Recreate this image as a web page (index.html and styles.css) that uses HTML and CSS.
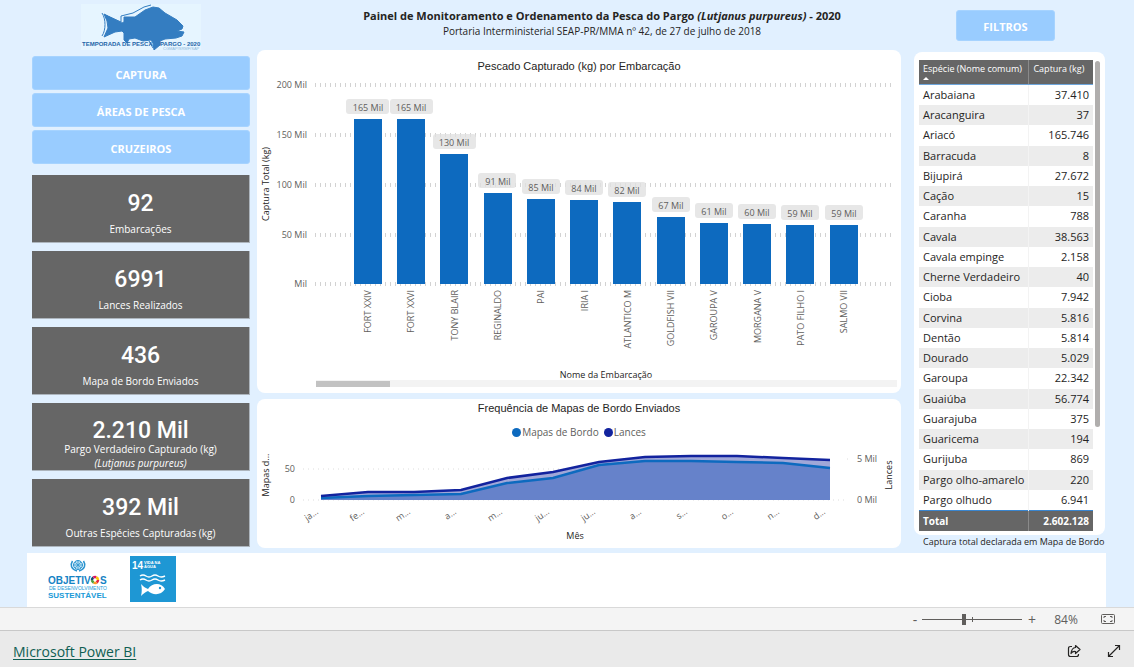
FILE: index.html
```html
<!DOCTYPE html>
<html lang="pt-BR">
<head>
<meta charset="utf-8">
<meta name="viewport" content="width=device-width, initial-scale=1">
<title>Painel de Monitoramento da Pesca do Pargo</title>
<link rel="stylesheet" href="styles.css">
</head>
<body>
<main class="report">
  <div class="dashboard">
    <aside class="sidebar">
      <svg class="brand" viewBox="0 0 120 46" role="img" aria-label="Temporada de Pesca Pargo 2020">
        <rect width="120" height="46" fill="#e6f5ff"/>
        <path d="M21 9 C25 15 25 26 21 32 M24 11 L40 18 L40 12 L52 9 L63 3 L70 1 M68 37 L72 44" fill="none" stroke="#347dc1" stroke-width="1"/>
        <path d="M23 10 L41 19 L43 18 L43 13 L54 13 L64 6 L72 3 L78 4 L84 9 L96 16 L102 22 L101 25 L96 27 L103 28 L101 32 L95 34 L84 35 L79 37 L79 41 L73 46 L72 39 L70 36 L62 37 L54 34 L48 35 L46 39 L43 36 L43 29 L41 27 L34 28 L23 33 L27 24 L26 17 Z" fill="#347dc1" stroke="#347dc1" stroke-linejoin="round"/>
        <text class="brand-name" x="1" y="42">TEMPORADA DE PESCA</text>
        <text class="brand-name" x="79" y="42">PARGO - 2020</text>
        <text class="brand-sub" x="82" y="46">CGMAP/SRMF/SAP</text>
      </svg>
      <nav class="nav">
        <button class="btn" type="button">CAPTURA</button>
        <button class="btn" type="button">ÁREAS DE PESCA</button>
        <button class="btn" type="button">CRUZEIROS</button>
      </nav>
      <section class="cards">
        <div class="card"><strong>92</strong><span>Embarcações</span></div>
        <div class="card"><strong>6991</strong><span>Lances Realizados</span></div>
        <div class="card"><strong>436</strong><span>Mapa de Bordo Enviados</span></div>
        <div class="card card-tight"><strong>2.210 Mil</strong><span>Pargo Verdadeiro Capturado (kg)</span><em>(Lutjanus purpureus)</em></div>
        <div class="card"><strong>392 Mil</strong><span>Outras Espécies Capturadas (kg)</span></div>
      </section>
    </aside>

    <div class="center">
      <header class="heading">
        <h1>Painel de Monitoramento e Ordenamento da Pesca do Pargo <em>(Lutjanus purpureus)</em> - 2020</h1>
        <p>Portaria Interministerial SEAP-PR/MMA nº 42, de 27 de julho de 2018</p>
      </header>

      <section class="panel panel-bars">
        <h2>Pescado Capturado (kg) por Embarcação</h2>
        <svg class="chart" viewBox="0 0 644 317" role="img" aria-label="Pescado Capturado (kg) por Embarcação">
          <g class="grid">
            <path d="M58 9H638M58 59H638M58 109H638M58 159H638M58 208H638"/>
          </g>
          <g class="tick end">
            <text x="50" y="12">200 Mil</text><text x="50" y="62">150 Mil</text><text x="50" y="112">100 Mil</text><text x="50" y="162">50 Mil</text><text x="50" y="211">Mil</text>
          </g>
          <g class="bars">
            <rect x="97" y="43" width="28" height="165"/><rect x="140" y="43" width="28" height="165"/><rect x="183" y="78" width="28" height="130"/><rect x="227" y="117" width="28" height="91"/><rect x="270" y="123" width="28" height="85"/><rect x="313" y="124" width="28" height="84"/><rect x="356" y="126" width="28" height="82"/><rect x="400" y="141" width="28" height="67"/><rect x="443" y="147" width="28" height="61"/><rect x="486" y="148" width="28" height="60"/><rect x="529" y="149" width="28" height="59"/><rect x="573" y="149" width="28" height="59"/>
          </g>
          <g class="pill">
            <rect x="89" y="23" width="43" height="15" rx="3"/><rect x="133" y="23" width="43" height="15" rx="3"/><rect x="176" y="58" width="43" height="15" rx="3"/><rect x="221" y="97" width="38" height="15" rx="3"/><rect x="265" y="103" width="38" height="15" rx="3"/><rect x="308" y="104" width="38" height="15" rx="3"/><rect x="351" y="106" width="38" height="15" rx="3"/><rect x="395" y="121" width="38" height="15" rx="3"/><rect x="438" y="127" width="38" height="15" rx="3"/><rect x="481" y="128" width="38" height="15" rx="3"/><rect x="524" y="129" width="38" height="15" rx="3"/><rect x="568" y="129" width="38" height="15" rx="3"/>
          </g>
          <g class="tick mid">
            <text x="111" y="35">165 Mil</text><text x="154" y="35">165 Mil</text><text x="197" y="70">130 Mil</text><text x="241" y="109">91 Mil</text><text x="284" y="115">85 Mil</text><text x="327" y="116">84 Mil</text><text x="370" y="118">82 Mil</text><text x="414" y="133">67 Mil</text><text x="457" y="139">61 Mil</text><text x="500" y="140">60 Mil</text><text x="543" y="141">59 Mil</text><text x="587" y="141">59 Mil</text>
          </g>
          <g class="tick end">
            <text transform="translate(114 214) rotate(-90)">FORT XXIV</text><text transform="translate(157 214) rotate(-90)">FORT XXVI</text><text transform="translate(201 214) rotate(-90)">TONY BLAIR</text><text transform="translate(244 214) rotate(-90)">REGINALDO</text><text transform="translate(287 214) rotate(-90)">PAI</text><text transform="translate(331 214) rotate(-90)">IRIA I</text><text transform="translate(374 214) rotate(-90)">ATLANTICO M</text><text transform="translate(417 214) rotate(-90)">GOLDFISH VII</text><text transform="translate(460 214) rotate(-90)">GAROUPA V</text><text transform="translate(504 214) rotate(-90)">MORGANA V</text><text transform="translate(547 214) rotate(-90)">PATO FILHO I</text><text transform="translate(590 214) rotate(-90)">SALMO VII</text>
          </g>
          <g class="axis mid">
            <text transform="translate(12 108) rotate(-90)">Captura Total (kg)</text>
            <text x="349" y="302">Nome da Embarcação</text>
          </g>
          <rect x="59" y="304" width="581" height="7" fill="#f3f3f3"/>
          <rect x="59" y="305" width="74" height="6" fill="#c2c2c2"/>
        </svg>
      </section>

      <section class="panel panel-area">
        <h2>Frequência de Mapas de Bordo Enviados</h2>
        <ul class="legend"><li class="key-maps">Mapas de Bordo</li><li class="key-sets">Lances</li></ul>
        <svg class="chart" viewBox="0 0 644 108" role="img" aria-label="Frequência de Mapas de Bordo Enviados">
          <path class="grid-fine" d="M46 29H538M46 60H590M590 19h1"/>
          <path d="M64 60V56L111 52L157 52L204 50L250 38L296 32L342 22L388 17L434 16L480 16L526 18L573 20V60Z" fill="#a0a7d8"/>
          <path d="M64 60V58L111 56L157 55L204 54L250 43L296 38L342 25L388 21L434 21L480 22L526 23L573 28V60Z" fill="#6682ca"/>
          <g fill="none" stroke-width="2.5">
            <path d="M64 58L111 56L157 55L204 54L250 43L296 38L342 25L388 21L434 21L480 22L526 23L573 28" stroke="#0d6abf"/>
            <path d="M64 56L111 52L157 52L204 50L250 38L296 32L342 22L388 17L434 16L480 16L526 18L573 20" stroke="#12239e"/>
          </g>
          <g class="tick end"><text x="38" y="32">50</text><text x="38" y="63">0</text></g>
          <g class="tick"><text x="600" y="22">5 Mil</text><text x="600" y="63">0 Mil</text></g>
          <g class="tick end">
            <text transform="translate(62 73) rotate(-35)">ja...</text><text transform="translate(108 73) rotate(-35)">fe...</text><text transform="translate(154 73) rotate(-35)">m...</text><text transform="translate(200 73) rotate(-35)">a...</text><text transform="translate(246 73) rotate(-35)">m...</text><text transform="translate(293 73) rotate(-35)">ju...</text><text transform="translate(339 73) rotate(-35)">ju...</text><text transform="translate(385 73) rotate(-35)">a...</text><text transform="translate(431 73) rotate(-35)">s...</text><text transform="translate(477 73) rotate(-35)">o...</text><text transform="translate(523 73) rotate(-35)">n...</text><text transform="translate(569 73) rotate(-35)">d...</text>
          </g>
          <g class="axis mid">
            <text transform="translate(12 35) rotate(-90)">Mapas d...</text>
            <text transform="translate(635 35) rotate(-90)">Lances</text>
            <text x="318" y="99">Mês</text>
          </g>
        </svg>
      </section>
    </div>

    <aside class="side-table">
      <button class="btn btn-filter" type="button">FILTROS</button>
      <div class="table-card">
        <table>
          <thead><tr><th scope="col">Espécie (Nome comum)<i class="sort"></i></th><th scope="col">Captura (kg)</th></tr></thead>
          <tbody>
            <tr><td>Arabaiana</td><td>37.410</td></tr>
            <tr><td>Aracanguira</td><td>37</td></tr>
            <tr><td>Ariacó</td><td>165.746</td></tr>
            <tr><td>Barracuda</td><td>8</td></tr>
            <tr><td>Bijupirá</td><td>27.672</td></tr>
            <tr><td>Cação</td><td>15</td></tr>
            <tr><td>Caranha</td><td>788</td></tr>
            <tr><td>Cavala</td><td>38.563</td></tr>
            <tr><td>Cavala empinge</td><td>2.158</td></tr>
            <tr><td>Cherne Verdadeiro</td><td>40</td></tr>
            <tr><td>Cioba</td><td>7.942</td></tr>
            <tr><td>Corvina</td><td>5.816</td></tr>
            <tr><td>Dentão</td><td>5.814</td></tr>
            <tr><td>Dourado</td><td>5.029</td></tr>
            <tr><td>Garoupa</td><td>22.342</td></tr>
            <tr><td>Guaiúba</td><td>56.774</td></tr>
            <tr><td>Guarajuba</td><td>375</td></tr>
            <tr><td>Guaricema</td><td>194</td></tr>
            <tr><td>Gurijuba</td><td>869</td></tr>
            <tr><td>Pargo olho-amarelo</td><td>220</td></tr>
            <tr><td>Pargo olhudo</td><td>6.941</td></tr>
          </tbody>
          <tfoot><tr><th scope="row">Total</th><td>2.602.128</td></tr></tfoot>
        </table>
        <div class="scroll"></div>
      </div>
      <p class="note">Captura total declarada em Mapa de Bordo</p>
    </aside>
  </div>

  <div class="partners">
    <svg class="ods" viewBox="0 0 60 46" role="img" aria-label="Objetivos de Desenvolvimento Sustentável">
      <g fill="none" stroke="#2a93cf" stroke-width="1">
        <circle cx="30" cy="9" r="4.500" fill="#b9dff2"/>
        <path d="M30 4.500V13.500M25.500 9H34.500M27 6L33 12M33 6L27 12" stroke-width=".7"/>
        <path d="M24.500 5C22 9 23 13 29 15M35.500 5C38 9 37 13 31 15" stroke-width="1.500"/>
      </g>
      <text class="ods-big" x="0" y="28">OBJETIV</text>
      <g fill="none" stroke-width="2.500"><circle cx="47" cy="24" r="3" stroke="#e5243b" stroke-dasharray="3 15.850"/><circle cx="47" cy="24" r="3" stroke="#fd9d24" stroke-dasharray="3 15.850" stroke-dashoffset="-3"/><circle cx="47" cy="24" r="3" stroke="#4c9f38" stroke-dasharray="3 15.850" stroke-dashoffset="-6"/><circle cx="47" cy="24" r="3" stroke="#19486a" stroke-dasharray="3 15.850" stroke-dashoffset="-9"/><circle cx="47" cy="24" r="3" stroke="#dd1367" stroke-dasharray="3 15.850" stroke-dashoffset="-12"/><circle cx="47" cy="24" r="3" stroke="#fcc30b" stroke-dasharray="3.850 15" stroke-dashoffset="-15"/></g>
      <text class="ods-big" x="52" y="28">S</text>
      <text class="ods-small" x="1" y="34">DE DESENVOLVIMENTO</text>
      <text class="ods-mid" x="0" y="42">SUSTENTÁVEL</text>
    </svg>
    <svg class="goal" viewBox="0 0 46 46" role="img" aria-label="ODS 14 Vida na água">
      <rect width="46" height="46" fill="#1e97d4"/>
      <text class="goal-num" x="2" y="13">14</text>
      <text class="goal-text" x="14" y="8">VIDA NA</text><text class="goal-text" x="14" y="12">ÁGUA</text>
      <path d="M10 20q3-2 6 0t6 0t6 0t7 0M10 24q3-2 6 0t6 0t6 0t7 0" fill="none" stroke="#fff" stroke-width="1.500"/>
      <path d="M11 28C13 30 15 32 18 33C22 27 31 26 35 33C31 40 22 39 18 35C15 36 13 38 11 40C12 36 12 32 11 28Z" fill="#fff"/>
      <circle cx="30" cy="32" r="1.200" fill="#1e97d4"/>
    </svg>
  </div>
</main>

<div class="zoombar">
  <button class="plain" type="button" aria-label="Reduzir">-</button>
  <div class="slider"><input type="range" min="0" max="100" value="42" aria-label="Zoom"><i></i></div>
  <button class="plain" type="button" aria-label="Ampliar">+</button>
  <output>84%</output>
  <button class="plain fit" type="button" aria-label="Ajustar à página">
    <svg width="14" height="12" viewBox="0 0 14 12" fill="none" stroke="#605e5c"><rect x=".5" y="1.500" width="13" height="9" rx="1"/><path d="M3 5V3.500H5M9 3.500H11V5M11 7V8.500H9M5 8.500H3V7"/></svg>
  </button>
</div>

<footer class="footer">
  <a href="#">Microsoft Power BI</a>
  <div class="footer-actions">
    <button class="plain" type="button" aria-label="Compartilhar">
      <svg width="14" height="14" viewBox="0 0 14 14" fill="none" stroke="#252423" stroke-width="1.200" stroke-linejoin="round"><path d="M5 2.500H3.500Q1.500 2.500 1.500 4.500V10.500Q1.500 12.500 3.500 12.500H9.500Q11.500 12.500 11.500 10.500V10"/><path d="M8.500 1.500L13 5.500L8.500 9.500V7.500Q5.500 7 4 9.500Q4.500 4 8.500 3.500Z"/></svg>
    </button>
    <button class="plain" type="button" aria-label="Tela inteira">
      <svg width="14" height="14" viewBox="0 0 14 14" fill="none" stroke="#252423" stroke-width="1.200"><path d="M1.500 12.500L12.500 1.500M8 1.500H12.500V6M1.500 8V12.500H6"/></svg>
    </button>
  </div>
</footer>
</body>
</html>
```

FILE: styles.css
```css
* { box-sizing: border-box; }

body {
  display: flex;
  flex-direction: column;
  min-height: 100vh;
  margin: 0;
  font-family: "Open Sans", "Noto Sans", sans-serif;
  font-size: 10px;
  color: #252423;
}

h1, h2, p, ul { margin: 0; padding: 0; }
button { font: inherit; cursor: pointer; }

.report {
  flex: 1;
  display: flex;
  flex-direction: column;
  background: #e1f0ff;
}

.dashboard {
  display: grid;
  grid-template-columns: 218px minmax(0, 1fr) 191px;
  padding: 0 29px 0 32px;
  margin-bottom: 4px;
}

/* Left column */
.sidebar { display: flex; flex-direction: column; padding-top: 4px; }
.brand { width: 120px; height: 46px; align-self: center; }
.brand-name { font: bold 6px "Liberation Sans", sans-serif; fill: #1f66a8; }
.brand-sub { font: 4px "Liberation Sans", sans-serif; fill: #8fb8dc; }

.nav { display: flex; flex-direction: column; gap: 3px; margin-top: 6px; }
.btn {
  height: 34px;
  padding: 2px 0 0;
  border: 1px solid #a6d3ff;
  border-radius: 3px;
  background: #99ccff;
  color: #fff;
  font-size: 11px;
  font-weight: 700;
}

.cards { display: flex; flex-direction: column; gap: 8px; margin-top: 11px; }
.card {
  display: flex;
  flex-direction: column;
  align-items: center;
  height: 68px;
  padding-top: 15px;
  border: solid #adb5bd;
  border-width: 0 1px 1px 0;
  background: #666;
  color: #fff;
  line-height: 14px;
}
.card strong {
  font: 500 23px/28px Roboto, sans-serif;
  margin-bottom: 4px;
}
.card-tight { padding-top: 17px; }
.card-tight strong { line-height: 22px; margin-bottom: 0; }

/* Centre column */
.center { display: flex; flex-direction: column; padding: 0 13px 0 7px; }
.heading { height: 50px; padding: 8px 0 0 46px; text-align: center; }
.heading h1 { font-size: 11px; line-height: 16px; font-weight: 700; }
.heading p { font-size: 10px; line-height: 14px; }

.panel { background: #fff; border-radius: 8px; }
.panel h2 {
  font: 11px/16px "Liberation Sans", Arial, sans-serif;
  text-align: center;
}
.panel-bars { padding-top: 8px; margin-bottom: 6px; }
.panel-bars h2 { margin-bottom: 2px; }
.panel-area { padding-top: 1px; }
.chart { display: block; width: 100%; height: auto; }

.legend {
  display: flex;
  justify-content: center;
  gap: 5px;
  padding-top: 8px;
  list-style: none;
  line-height: 16px;
  color: #605e5c;
}
.legend li { display: flex; align-items: center; gap: 1px; }
.legend li::before { content: ""; width: 9px; height: 9px; border-radius: 50%; }
.key-maps::before { background: #0d6abf; }
.key-sets::before { background: #12239e; }

.grid { fill: none; stroke: #d2d2d2; stroke-width: 4; stroke-dasharray: 1 4; }
.grid-fine { fill: none; stroke: #dcdcdc; stroke-width: 1; stroke-dasharray: 1 4; }
.bars { fill: #0d6abf; }
.pill { fill: #e1e1e1; fill-opacity: .8; }
.tick { font-size: 9px; fill: #605e5c; }
.axis { font-size: 9px; fill: #252423; }
.end { text-anchor: end; }
.mid { text-anchor: middle; }

/* Right column */
.side-table { display: flex; flex-direction: column; padding-top: 10px; }
.btn-filter { width: 99px; height: 31px; margin: 0 0 11px 42px; }
.table-card {
  display: flex;
  align-items: flex-start;
  padding: 8px 5px 4px;
  border-radius: 8px;
  background: #fff;
}
table { flex: 1; table-layout: fixed; border-collapse: collapse; font-size: 11px; }
th, td { padding: 0 4px; text-align: left; white-space: nowrap; }
td:last-child { text-align: right; }
th:first-child, td:first-child { width: 62%; border-right: 1px solid #f3f3f3; }
thead th {
  height: 24px;
  padding-top: 2px;
  background: #666;
  border-bottom: 1px solid #6ea6dc;
  color: #fff;
  font-size: 9px;
  line-height: 14px;
  font-weight: 400;
  vertical-align: top;
}
thead th:first-child, tfoot th:first-child { border-right-color: #8a8a8a; }
.sort {
  display: block;
  width: 0;
  margin-top: 1px;
  border: solid transparent;
  border-width: 0 3px 3px;
  border-bottom-color: #fff;
}
tbody td { height: 20px; line-height: 20px; }
tbody tr:nth-child(4n+3) td { height: 21px; }
tbody tr:nth-child(even) { background: #ececec; }
tfoot th, tfoot td {
  height: 21px;
  border-top: 1px solid #3a86d0;
  background: #666;
  color: #fff;
  font-size: 10px;
  font-weight: 700;
}
.scroll { width: 5px; height: 366px; margin: 1px 0 0 2px; border-radius: 3px; background: #b0aead; }
.note { padding-left: 9px; font-size: 9px; line-height: 14px; white-space: nowrap; }

/* Partner strip */
.partners {
  flex: 1;
  display: flex;
  align-items: flex-start;
  gap: 22px;
  margin: 0 28px 0 27px;
  padding: 3px 21px;
  background: #fff;
}
.ods { width: 60px; height: 46px; }
.goal { width: 46px; height: 46px; }
.ods text { font-family: "Liberation Sans", sans-serif; font-weight: bold; fill: #1a9ad7; }
.ods .ods-big { font-size: 10px; fill: #1583c4; }
.ods .ods-small { font-size: 5px; font-weight: 400; }
.ods .ods-mid { font-size: 8px; }
.goal-num { font: bold 10px "Liberation Sans", sans-serif; fill: #fff; }
.goal-text { font: bold 4px "Liberation Sans", sans-serif; fill: #fff; }

/* Zoom bar */
.zoombar {
  display: flex;
  align-items: center;
  justify-content: flex-end;
  height: 24px;
  padding-right: 19px;
  border: solid #d9d9d9;
  border-width: 1px 0;
  border-bottom-color: #c8c8c8;
  background: #f4f4f4;
  color: #605e5c;
  font-size: 12px;
}
.plain {
  display: flex;
  align-items: center;
  justify-content: center;
  padding: 0;
  border: 0;
  background: none;
  color: inherit;
}
.zoombar .plain { width: 14px; height: 20px; font-size: 14px; }
.slider { position: relative; width: 100px; height: 20px; margin: 0 3px 0 0; }
.slider input {
  appearance: none;
  display: block;
  width: 100%;
  height: 20px;
  margin: 0;
  background: linear-gradient(#605e5c, #605e5c) center / 100% 1px no-repeat;
}
.slider input::-webkit-slider-thumb {
  appearance: none;
  width: 4px;
  height: 11px;
  background: #605e5c;
}
.slider i { position: absolute; left: 50%; top: 8px; width: 1px; height: 5px; background: #605e5c; }
.zoombar output { width: 54px; text-align: center; margin-right: 8px; }

/* Footer */
.footer {
  display: flex;
  align-items: center;
  justify-content: space-between;
  height: 36px;
  padding: 4px 13px 0;
  background: #eaeaea;
}
.footer a { color: #0f5e53; font-size: 14px; text-underline-offset: 2px; }
.footer-actions { display: flex; gap: 26px; }
```
